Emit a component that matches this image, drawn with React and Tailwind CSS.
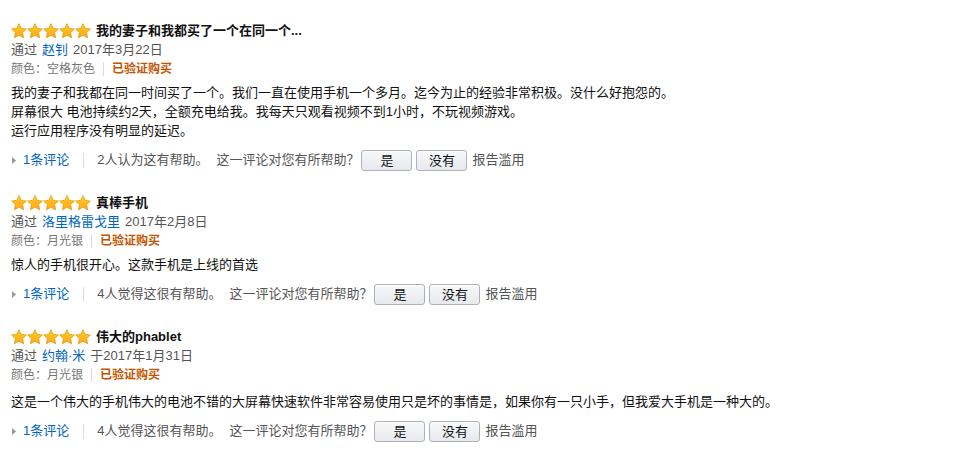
import React from "react";

const reviews = [
  {
    title: "我的妻子和我都买了一个在同一个...",
    author: "赵钊",
    date: "2017年3月22日",
    color: "空格灰色",
    body: [
      "我的妻子和我都在同一时间买了一个。我们一直在使用手机一个多月。迄今为止的经验非常积极。没什么好抱怨的。",
      "屏幕很大 电池持续约2天，全额充电给我。我每天只观看视频不到1小时，不玩视频游戏。",
      "运行应用程序没有明显的延迟。",
    ],
    helpful: "2人认为这有帮助。",
    bodyGap: "mt-[5px]",
  },
  {
    title: "真棒手机",
    author: "洛里格雷戈里",
    date: "2017年2月8日",
    color: "月光银",
    body: ["惊人的手机很开心。这款手机是上线的首选"],
    helpful: "4人觉得这很有帮助。",
    bodyGap: "mt-[5px]",
  },
  {
    title: "伟大的phablet",
    author: "约翰·米",
    date: "于2017年1月31日",
    color: "月光银",
    body: ["这是一个伟大的手机伟大的电池不错的大屏幕快速软件非常容易使用只是坏的事情是，如果你有一只小手，但我爱大手机是一种大的。"],
    helpful: "4人觉得这很有帮助。",
    bodyGap: "mt-[8px]",
  },
];

function Star() {
  return (
    <svg width="16" height="16" viewBox="0 0 16 16">
      <defs>
        <linearGradient id="starFill" x1="0" y1="0" x2="0" y2="1">
          <stop offset="0" stopColor="#ffd21f" />
          <stop offset="1" stopColor="#ffa41c" />
        </linearGradient>
      </defs>
      <path
        d="M8 0.7l2.3 4.7 5.1 0.6-3.8 3.6 1 5.2L8 12.2l-4.6 2.6 1-5.2L0.6 6l5.1-0.6z"
        fill="url(#starFill)"
        stroke="#e29a12"
        strokeWidth="0.8"
        strokeLinejoin="round"
      />
    </svg>
  );
}

function VoteButton({ children }) {
  return (
    <button className="h-[21px] w-[51px] rounded-[3px] border border-[#adb1b8] bg-gradient-to-b from-[#f7f8fa] to-[#e7e9ec] text-[13px] leading-none text-[#111] shadow-[0_1px_0_rgba(255,255,255,0.6)_inset]">
      {children}
    </button>
  );
}

function Review({ r, first }) {
  return (
    <div className={first ? "" : "mt-[22px]"}>
      <div className="flex h-[19px] items-center">
        <div className="flex">
          <Star />
          <Star />
          <Star />
          <Star />
          <Star />
        </div>
        <span className="ml-[5px] text-[13px] font-bold text-[#111]">{r.title}</span>
      </div>
      <div className="flex h-[19px] items-center text-[13px] text-[#555]">
        <span>通过</span>
        <span className="ml-[5px] text-[#0066c0]">{r.author}</span>
        <span className="ml-[5px]">{r.date}</span>
      </div>
      <div className="flex h-[19px] items-center text-[12px]">
        <span className="text-[#767676]">颜色：{r.color}</span>
        <span className="mx-[8px] h-[14px] w-px bg-[#ddd]" />
        <span className="font-bold text-[#c45500]">已验证购买</span>
      </div>
      <div className={r.bodyGap + " text-[13px] leading-[19px] text-[#111]"}>
        {r.body.map((line, i) => (
          <p key={i}>{line}</p>
        ))}
      </div>
      <div className="mt-[9px] flex h-[22px] items-center text-[13px] text-[#555]">
        <svg width="4" height="7" viewBox="0 0 4 7" className="ml-[1px]">
          <path d="M0 0l4 3.5L0 7z" fill="#999" />
        </svg>
        <span className="ml-[7px] text-[#0066c0]">1条评论</span>
        <span className="ml-[14px] h-[15px] w-px bg-[#ddd]" />
        <span className="ml-[13px]">{r.helpful}</span>
        <span className="ml-[8px]">这一评论对您有所帮助？</span>
        <div className="ml-[2px] flex gap-[4px]">
          <VoteButton>是</VoteButton>
          <VoteButton>没有</VoteButton>
        </div>
        <span className="ml-[5px]">报告滥用</span>
      </div>
    </div>
  );
}

export default function App() {
  return (
    <div
      className="min-h-screen bg-white pl-[11px] pt-[21px]"
      style={{ fontFamily: '"Liberation Sans", "Noto Sans CJK SC", sans-serif' }}
    >
      {reviews.map((r, i) => (
        <Review key={i} r={r} first={i === 0} />
      ))}
    </div>
  );
}
